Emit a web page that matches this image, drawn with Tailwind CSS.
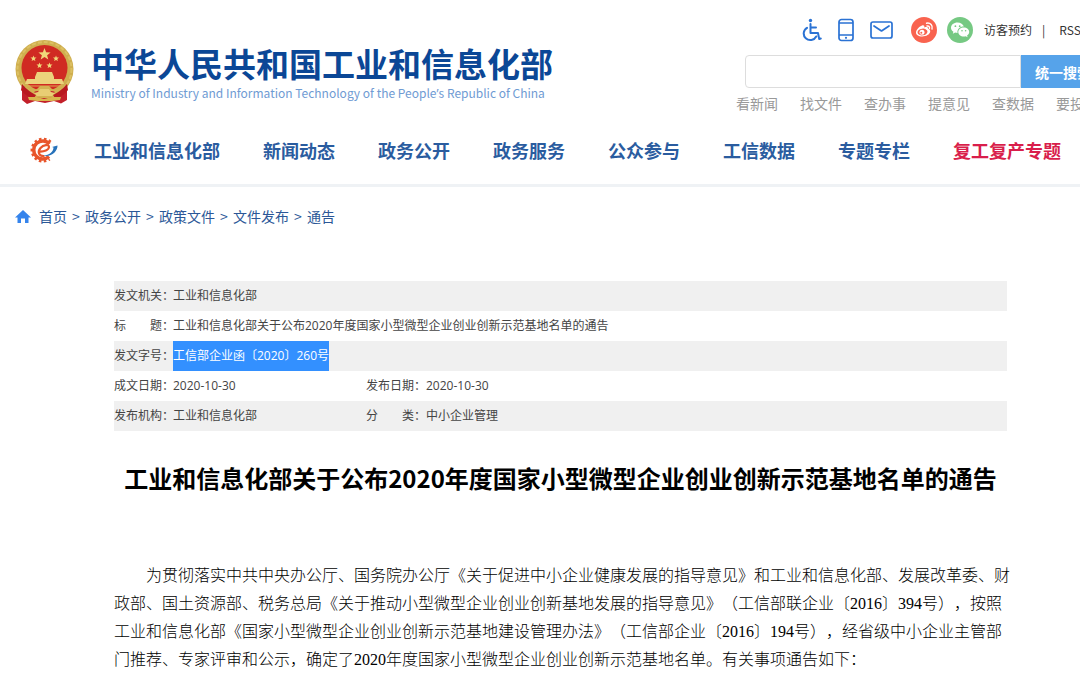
<!DOCTYPE html>
<html lang="zh-CN">
<head>
<meta charset="utf-8">
<meta name="viewport" content="width=device-width, initial-scale=1">
<title>工业和信息化部关于公布2020年度国家小型微型企业创业创新示范基地名单的通告</title>
<script src="https://cdn.jsdelivr.net/npm/@tailwindcss/browser@4"></script>
</head>
<body class="overflow-x-hidden bg-white font-['Noto_Sans_CJK_SC',sans-serif] text-[#333] [text-spacing-trim:space-all]">
<header class="border-b-[3px] border-[#eff2f5] bg-white">
  <div class="flex items-start">
    <a href="#" class="flex items-start pt-10 pl-3.5">
      <svg class="h-16 w-[61px] shrink-0" viewBox="0 0 61 64" role="img" aria-label="国徽">
        <path d="M8 42L53 42L53 60L47 63.500L40 61L31 63L21 61L13 64L8 60Z" fill="#c3202a"/>
        <circle cx="30.500" cy="29" r="29" fill="#cfae4e"/>
        <circle cx="30.500" cy="29" r="27" fill="none" stroke="#dcc063" stroke-width="2" stroke-dasharray="4 2"/>
        <circle cx="30.500" cy="28" r="23" fill="#d02a22"/>
        <g fill="#f0d87a">
          <path d="M30.500 8l1.600 4.200 4.500.2-3.500 2.800 1.200 4.300-3.800-2.500-3.800 2.500 1.200-4.300-3.500-2.800 4.500-.2z"/>
          <path id="s" d="M19.500 15.500l.8 2 2.200.1-1.700 1.400.6 2.100-1.900-1.200-1.900 1.200.6-2.100-1.700-1.400 2.200-.1z"/>
          <use href="#s" x="22.500"/><use href="#s" x="6" y="7"/><use href="#s" x="16" y="7"/>
        </g>
        <path d="M23 32h15l2 5v2h8l2 5H11l2-5h8v-2z" fill="#ecd27c"/>
        <path d="M12 46h37" stroke="#e0a850" stroke-width="1"/>
        <path d="M10 47c7 3 10 3 13 2l3-3h9l3 3c3 1 6 1 13-2l-4 7c-6 3-9 4-16 4s-11-1-17-4z" fill="#d3b252"/>
        <path d="M20 52c4-2 17-2 21 0l-3 3H23z" fill="#c3202a"/>
        <path d="M26 49h9l2 3 4 1-3 3H23l-3-3 4-1z" fill="#e8cd74"/>
        <path d="M8 44c5 6 10 9 14 11l-2 3c-6-1-10-4-13-8zM53 44c-5 6-10 9-14 11l2 3c6-1 10-4 13-8z" fill="#b8181f"/>
        <path d="M14 57l9 0 7 2 8-2 9 0-1 3-8 1-8 0-7 0-8-1z" fill="#d9b64e"/>
      </svg>
      <span class="ml-4 flex flex-col whitespace-nowrap pt-[3px]">
        <span class="text-[33px] leading-10 font-bold text-[#0b4796]">中华人民共和国工业和信息化部</span>
        <span class="text-xs leading-5 text-[#6f9bd3]" lang="en">Ministry of Industry and Information Technology of the People<span class="font-['Noto_Sans']">’</span>s Republic of China</span>
      </span>
    </a>
    <div class="ml-auto w-[344px] shrink-0 overflow-hidden pt-[17px] whitespace-nowrap">
      <div class="flex h-[26px] items-center pl-[66px] text-xs">
        <a href="#" aria-label="无障碍"><svg class="h-6 w-5" viewBox="0 0 20 24" fill="none" stroke="#2a72d4" stroke-width="2" stroke-linecap="round" stroke-linejoin="round"><circle cx="8.500" cy="2.500" r="1.700" fill="#2a72d4" stroke="none"/><path d="M8.500 6v9h7.500l1.200 6 1.600-.5M8.500 9.500h5.500M5 9.800a6.600 6.600 0 1 0 9.200 8.700"/></svg></a>
        <a href="#" aria-label="手机版" class="ml-4"><svg class="h-6 w-4" viewBox="0 0 16 24" fill="none" stroke="#2a72d4" stroke-width="1.700"><rect x="1" y="1.500" width="14" height="21" rx="2.500"/><path d="M1 5h14M1 17h14"/><circle cx="8" cy="19.800" r="1.100" fill="#2a72d4" stroke="none"/></svg></a>
        <a href="#" aria-label="邮箱" class="ml-4"><svg class="h-[18px] w-[23px]" viewBox="0 0 23 18" fill="none" stroke="#2a72d4" stroke-width="1.700" stroke-linejoin="round" stroke-linecap="round"><rect x="1" y="1" width="21" height="16" rx="2"/><path d="M4 5l7.500 5L19 5"/></svg></a>
        <a href="#" aria-label="微博" class="ml-[18px]"><svg class="size-[26px]" viewBox="0 0 26 26"><circle cx="13" cy="13" r="13" fill="#f9634f"/><path d="M11 8.500c1.600-.6 2.700.1 2.300 1.900 2-.8 4-.7 3.700 1.400 1.500.5 2.500 1.500 2.200 3-.5 2.600-4 4.700-8 4.700-3.800 0-6.400-1.800-6.200-4.300C5.200 12.600 8.500 9.300 11 8.500z" fill="#fff"/><ellipse cx="11.500" cy="15" rx="5" ry="3.400" fill="#f9634f" transform="rotate(-8 11.500 15)"/><circle cx="11" cy="15.200" r="2.500" fill="#fff"/><circle cx="10.300" cy="15.700" r="1" fill="#f9634f"/><path d="M15.500 6.200c3.800-.8 6.600 2.200 5.500 5.800M16 9c1.800-.3 2.900 1 2.400 2.600" fill="none" stroke="#fff" stroke-width="1.400" stroke-linecap="round"/></svg></a>
        <a href="#" aria-label="微信" class="ml-2.5"><svg class="size-[26px]" viewBox="0 0 26 26"><circle cx="13" cy="13" r="13" fill="#76c983"/><path d="M10.500 5.500c-3.700 0-6.500 2.300-6.500 5.200 0 1.700.9 3.100 2.400 4.100l-.6 2 2.400-1.200c.8.200 1.500.3 2.300.3-.5-3.800 2.500-6.400 6.300-6.300-.6-2.400-3.200-4.100-6.300-4.100z" fill="#fff"/><path d="M16.800 10.500c-3.100 0-5.500 2-5.500 4.500s2.400 4.500 5.500 4.500c.7 0 1.300-.1 1.900-.3l1.900 1-.5-1.700c1.300-.8 2.100-2.100 2.100-3.500 0-2.500-2.400-4.500-5.400-4.500z" fill="#fff"/><g fill="#76c983"><circle cx="8.400" cy="9.200" r=".9"/><circle cx="12.700" cy="9.200" r=".9"/><circle cx="15" cy="13.700" r=".8"/><circle cx="18.600" cy="13.700" r=".8"/></g></svg></a>
        <a href="#" class="ml-[11px]">访客预约</a>
        <span class="ml-2.5">|</span>
        <a href="#" class="ml-3.5">RSS订阅</a>
      </div>
      <form class="mt-3 flex h-[33px] pl-[9px]">
        <input type="search" aria-label="搜索" class="w-[276px] shrink-0 rounded-l-sm border border-[#ddd] bg-white px-2 text-sm outline-none">
        <button type="button" class="shrink-0 bg-[#56a3ea] px-3.5 text-sm font-bold text-white">统一搜索</button>
      </form>
      <div class="mt-[5px] flex gap-[22px] text-sm leading-5 text-[#999]">
        <a href="#" class="shrink-0">看新闻</a><a href="#" class="shrink-0">找文件</a><a href="#" class="shrink-0">查办事</a><a href="#" class="shrink-0">提意见</a><a href="#" class="shrink-0">查数据</a><a href="#" class="shrink-0">要投诉</a>
      </div>
    </div>
  </div>
  <nav class="flex h-[71px] items-center gap-[43px] pt-[3px] pl-[29px] text-lg font-bold whitespace-nowrap text-[#2a5c9f]" aria-label="主导航">
    <a href="#" aria-label="工信部首页" class="-mr-2 shrink-0">
      <svg class="h-[26px] w-[30px]" viewBox="0 0 30 26" fill="none"><path d="M21.500 5A11 11 0 1 0 20.500 22" stroke="#e8552b" stroke-width="3" stroke-dasharray="2.500 2.300"/><path d="M20.500 7A9 9 0 1 0 20 19.500" stroke="#e8552b" stroke-width="3.400"/><path d="M10.500 14.500c4.500.3 9.300-1.500 9.500-4.500 0-3-5.500-2.500-8.500 1-3.500 4.200-1.500 8.500 4 8" stroke="#e8552b" stroke-width="2.200"/><path d="M14 18.500c6 .3 10.500-4 10.500-8l-1.500-.5 5.500-1.500c.2 6-6.500 12-14.500 10z" fill="#2672ba"/></svg>
    </a>
    <a href="#">工业和信息化部</a><a href="#">新闻动态</a><a href="#">政务公开</a><a href="#">政务服务</a><a href="#">公众参与</a><a href="#">工信数据</a><a href="#">专题专栏</a><a href="#" class="text-[#d91e4b]">复工复产专题</a>
  </nav>
</header>
<main>
  <nav class="mt-[19px] flex items-center pl-[15px] text-sm leading-5 text-[#2b5797]" aria-label="当前位置">
    <svg class="mr-2 h-[13px] w-4" viewBox="0 0 16 13" fill="#3584ec" aria-hidden="true"><path d="M8 0l8 7.500h-2.500V13H10V8.500H6V13H2.500V7.500H0z"/></svg>
    <a href="#">首页</a><span class="w-[18px] text-center">&gt;</span><a href="#">政务公开</a><span class="w-[18px] text-center">&gt;</span><a href="#">政策文件</a><span class="w-[18px] text-center">&gt;</span><a href="#">文件发布</a><span class="w-[18px] text-center">&gt;</span><a href="#">通告</a>
  </nav>
  <article class="mr-[73px] ml-[114px]">
    <table class="mt-[55px] w-full table-fixed text-left font-['Open_Sans','Noto_Sans_CJK_SC',sans-serif] text-xs text-[#444]">
      <colgroup><col class="w-[59px]"><col class="w-[193px]"><col class="w-[60px]"><col></colgroup>
      <tbody class="[&_th]:font-normal [&_th]:whitespace-nowrap [&_tr]:h-[30px]">
        <tr class="bg-[#f0f0f0]"><th scope="row">发文机关：</th><td colspan="3">工业和信息化部</td></tr>
        <tr><th scope="row">标&emsp;&emsp;题：</th><td colspan="3">工业和信息化部关于公布2020年度国家小型微型企业创业创新示范基地名单的通告</td></tr>
        <tr class="bg-[#f0f0f0]"><th scope="row">发文字号：</th><td colspan="3"><mark class="inline-block bg-[#3390ff] leading-[30px] text-white">工信部企业函〔2020〕260号</mark></td></tr>
        <tr><th scope="row">成文日期：</th><td>2020-10-30</td><th scope="row">发布日期：</th><td>2020-10-30</td></tr>
        <tr class="bg-[#f0f0f0]"><th scope="row">发布机构：</th><td>工业和信息化部</td><th scope="row">分&emsp;&emsp;类：</th><td>中小企业管理</td></tr>
      </tbody>
    </table>
    <h1 class="mt-[29px] text-center text-2xl leading-9 font-bold whitespace-nowrap text-black">工业和信息化部关于公布2020年度国家小型微型企业创业创新示范基地名单的通告</h1>
    <p class="mt-[66px] indent-8 font-['Liberation_Serif','Noto_Sans_CJK_SC',serif] text-base leading-7 font-light whitespace-nowrap text-black">为贯彻落实中共中央办公厅、国务院办公厅《关于促进中小企业健康发展的指导意见》和工业和信息化部、发展改革委、财<br>政部、国土资源部、税务总局《关于推动小型微型企业创业创新基地发展的指导意见》（工信部联企业〔2016〕394号），按照<br>工业和信息化部《国家小型微型企业创业创新示范基地建设管理办法》（工信部企业〔2016〕194号），经省级中小企业主管部<br>门推荐、专家评审和公示，确定了2020年度国家小型微型企业创业创新示范基地名单。有关事项通告如下：</p>
  </article>
</main>
</body>
</html>
